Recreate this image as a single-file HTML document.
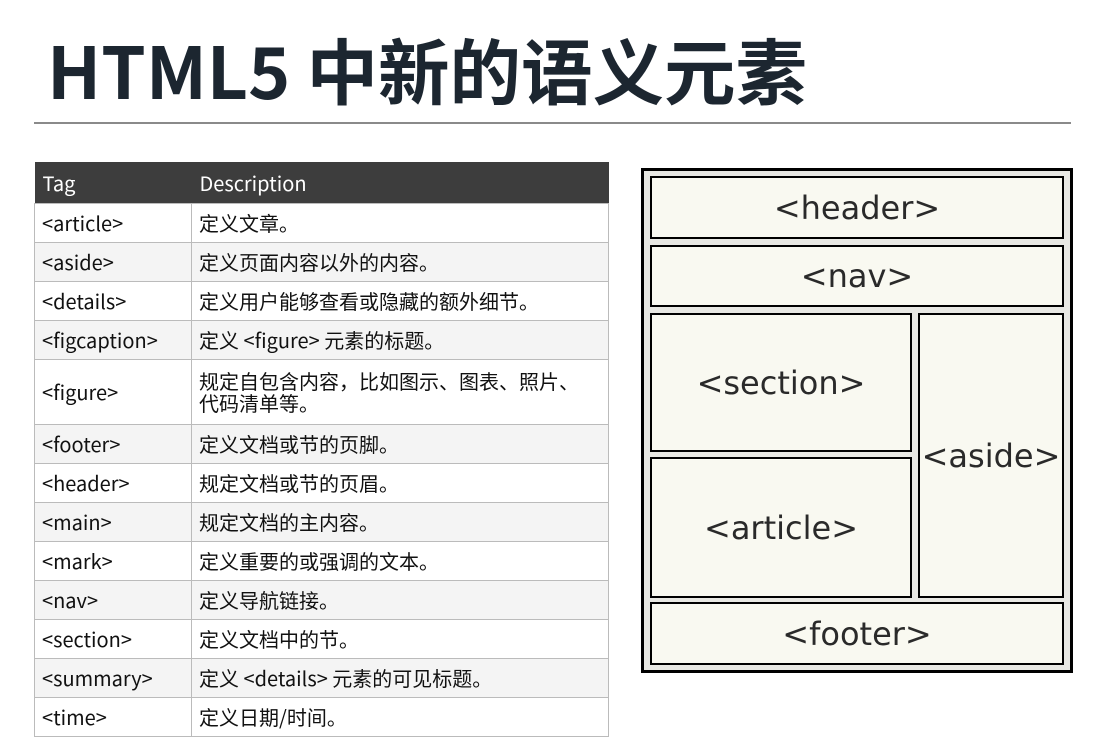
<!DOCTYPE html>
<html><head><meta charset="utf-8"><style>
*{margin:0;padding:0;box-sizing:border-box}
body{width:1103px;height:751px;background:#fff;position:relative;overflow:hidden;font-family:"Liberation Sans","Noto Sans CJK SC",sans-serif}
h1{position:absolute;left:47px;top:18px;font-family:"Noto Sans CJK SC",sans-serif;font-weight:bold;font-size:71.5px;line-height:100px;color:#1c2630;white-space:nowrap}
.hr{position:absolute;left:34px;top:122px;width:1037px;height:2px;background:#8a8a8a}
table{position:absolute;left:34px;top:162px;width:575px;border-collapse:collapse;font-family:"Noto Sans CJK SC",sans-serif;font-size:20px;color:#111;table-layout:fixed}
th{background:#3d3d3d;color:#fff;font-weight:normal;text-align:left;height:41px;padding:0 8px}
th:first-child{width:157px}
td{border:1px solid #bbb;padding:0 7px;height:39px;line-height:22px;overflow:hidden}
tr:nth-child(odd) td{background:#f4f4f4}
.f{position:absolute;left:641px;top:168px;width:432px;height:505px;background:#e8e8e3;border:3px solid #000}
.b{position:absolute;background:#f9f9f1;border:2px solid #000;display:flex;align-items:center;justify-content:center;font-family:"DejaVu Sans",sans-serif;font-size:32px;color:#2a2a2a}
</style></head><body>
<h1>HTML5 中新的语义元素</h1>
<div class="hr"></div>
<table>
<tr><th>Tag</th><th>Description</th></tr>
<tr><td>&lt;article&gt;</td><td>定义文章。</td></tr>
<tr><td>&lt;aside&gt;</td><td>定义页面内容以外的内容。</td></tr>
<tr><td>&lt;details&gt;</td><td>定义用户能够查看或隐藏的额外细节。</td></tr>
<tr><td>&lt;figcaption&gt;</td><td>定义 &lt;figure&gt; 元素的标题。</td></tr>
<tr><td style="height:65px">&lt;figure&gt;</td><td>规定自包含内容，比如图示、图表、照片、<br>代码清单等。</td></tr>
<tr><td>&lt;footer&gt;</td><td>定义文档或节的页脚。</td></tr>
<tr><td>&lt;header&gt;</td><td>规定文档或节的页眉。</td></tr>
<tr><td>&lt;main&gt;</td><td>规定文档的主内容。</td></tr>
<tr><td>&lt;mark&gt;</td><td>定义重要的或强调的文本。</td></tr>
<tr><td>&lt;nav&gt;</td><td>定义导航链接。</td></tr>
<tr><td>&lt;section&gt;</td><td>定义文档中的节。</td></tr>
<tr><td>&lt;summary&gt;</td><td>定义 &lt;details&gt; 元素的可见标题。</td></tr>
<tr><td>&lt;time&gt;</td><td>定义日期/时间。</td></tr>
</table>
<div class="f"></div>
<div class="b" style="left:650px;top:176px;width:414px;height:63px">&lt;header&gt;</div>
<div class="b" style="left:650px;top:245px;width:414px;height:62px">&lt;nav&gt;</div>
<div class="b" style="left:650px;top:313px;width:262px;height:139px">&lt;section&gt;</div>
<div class="b" style="left:918px;top:313px;width:146px;height:285px">&lt;aside&gt;</div>
<div class="b" style="left:650px;top:457px;width:262px;height:141px">&lt;article&gt;</div>
<div class="b" style="left:650px;top:602px;width:414px;height:63px">&lt;footer&gt;</div>
</body></html>
